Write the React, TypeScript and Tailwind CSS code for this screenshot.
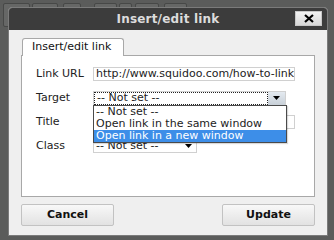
import React from 'react';

const font = { fontFamily: '"DejaVu Sans", Verdana, sans-serif' };

// faint toolbar buttons of the page behind the overlay
const toolbar = [
  { w: 'w-[27px]', ml: 'ml-[3px]' },
  { w: 'w-[26px]', ml: 'ml-[2px]' },
  { w: 'w-[18px]', ml: 'ml-[5px]' },
  { w: 'w-[23px]', ml: 'ml-[13px]' },
  { w: 'w-[13px]', ml: 'ml-[2px]' },
  { w: 'w-[24px]', ml: 'ml-[3px]' },
  { w: 'w-[23px]', ml: 'ml-[5px]' },
];

function Arrow(): React.ReactElement {
  return (
    <svg width="7" height="4" viewBox="0 0 7 4">
      <path d="M0 0h7L3.5 4z" fill="#000" />
    </svg>
  );
}

export default function App(): React.ReactElement {
  return (
    <div className="relative w-[334px] h-[240px] overflow-hidden bg-[#5b5c5b]" style={font}>
      {/* page toolbar behind the overlay */}
      <div className="flex pt-[3px]">
        {toolbar.map((b, i) => (
          <div
            key={i}
            className={`${b.w} ${b.ml} h-[24px] rounded-[2px] border border-[#474847] bg-[#666766]`}
          />
        ))}
      </div>

      {/* dialog window */}
      <div className="absolute left-[8px] top-[7px] w-[320px] h-[229px] flex flex-col rounded-t-[4px] border border-[#7b7b7b] bg-[#efefef] overflow-hidden">
        {/* Title bar */}
        <div className="relative h-[22px] flex items-center justify-center bg-[#3c3c3c]">
          <span className="text-[12px] font-bold text-[#dcdcdc] tracking-[0.2px]">Insert/edit link</span>
          <div className="absolute right-[5px] top-[3px] w-[27px] h-[15px] flex items-center justify-center bg-gradient-to-b from-[#f2f2f2] to-[#d8d8d8] border border-[#c8c8c8]">
            <svg width="10" height="9" viewBox="0 0 10 9">
              <path d="M1 1l8 7M9 1L1 8" stroke="#000" strokeWidth="2.2" />
            </svg>
          </div>
        </div>

        {/* Body */}
        <div className="flex-1 flex flex-col px-[12px] pt-[8px]">
          {/* Tab */}
          <div className="relative z-10 ml-[1px] w-[102px] h-[18px] -mb-[1px] flex items-center pl-[9px] rounded-t-[3px] border border-b-0 border-[#a8a8a8] bg-white">
            <span className="text-[11px] text-[#111]">Insert/edit link</span>
          </div>

          {/* Panel */}
          <div className="relative h-[142px] border border-[#a8a8a8] bg-white pl-[14px] pr-[19px] pt-[11px] text-[11px] text-[#222]">
            <div className="flex flex-col gap-[10px]">
              <div className="flex items-center h-[14px]">
                <span className="w-[57px]">Link URL</span>
                <div className="flex-1 h-[14px] flex items-center pl-[2px] border border-[#d0d0d0] overflow-hidden whitespace-nowrap">
                  http://www.squidoo.com/how-to-link
                </div>
              </div>

              <div className="flex items-center h-[14px]">
                <span className="w-[57px]">Target</span>
                <div className="w-[193px] h-[15px] flex border border-[#d0d0d0]">
                  <div className="flex-1 flex items-center pl-[2px] border border-dotted border-[#222]">
                    -- Not set --
                  </div>
                  <div className="w-[17px] flex items-center justify-center bg-gradient-to-b from-[#e4eaf0] to-[#c8d0d8]">
                    <Arrow />
                  </div>
                </div>
              </div>

              <div className="flex items-center h-[14px]">
                <span className="w-[57px]">Title</span>
                <div className="flex-1 h-[14px] border border-[#d0d0d0]" />
              </div>

              <div className="flex items-center h-[14px]">
                <span className="w-[57px]">Class</span>
                <div className="w-[104px] h-[14px] flex items-center justify-between pl-[2px] pr-[4px] border border-[#d0d0d0]">
                  <span>-- Not set --</span>
                  <Arrow />
                </div>
              </div>
            </div>

            {/* open dropdown list */}
            <div className="absolute left-[71px] top-[49px] w-[194px] flex flex-col border border-[#4a4a4a] bg-white shadow-[1px_1px_1px_rgba(0,0,0,0.15)]">
              <div className="h-[12px] flex items-center pl-[2px]">-- Not set --</div>
              <div className="h-[12px] flex items-center pl-[2px]">Open link in the same window</div>
              <div className="h-[12px] flex items-center pl-[2px] bg-[#3d8ee8] text-white">Open link in a new window</div>
            </div>
          </div>

          {/* Buttons */}
          <div className="flex justify-between mt-[7px]">
            <button className="w-[93px] h-[22px] rounded-[2px] border border-[#c2c2c2] bg-gradient-to-b from-[#f8f8f8] to-[#e2e2e2] text-[11px] font-bold text-[#111]">
              Cancel
            </button>
            <button className="w-[93px] h-[22px] rounded-[2px] border border-[#c2c2c2] bg-gradient-to-b from-[#f8f8f8] to-[#e2e2e2] text-[11px] font-bold text-[#111]">
              Update
            </button>
          </div>
        </div>
      </div>
    </div>
  );
}
